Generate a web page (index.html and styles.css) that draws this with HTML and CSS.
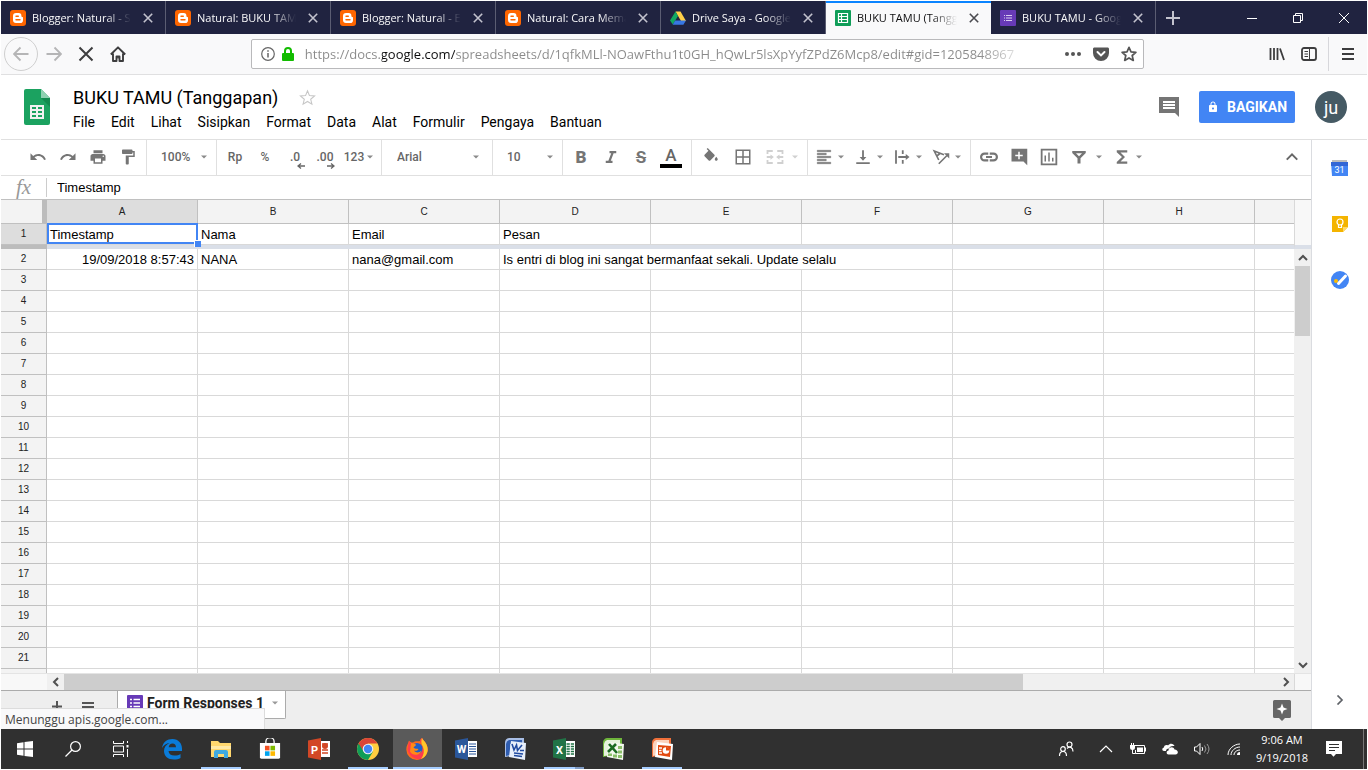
FILE: index.html
```html
<!DOCTYPE html>
<html lang="id">
	<head>
		<meta charset="UTF-8">
		<title>BUKU TAMU (Tanggapan)</title>
		<link rel="stylesheet" href="styles.css">
	</head>
	<body>
		<!-- icons used more than once -->
		<svg class="defs" aria-hidden="true">
			<symbol id="i-close" viewBox="0 0 10 10"><path d="M.8.8l8.4 8.4M9.2.8L.8 9.2" fill="none" stroke="currentColor" stroke-width="1.6"/></symbol>
			<symbol id="i-down" viewBox="0 0 8 8"><path d="M1 2.5h6l-3 3z" fill="currentColor"/></symbol>
			<symbol id="i-blogger" viewBox="0 0 16 16">
				<rect width="16" height="16" rx="3" fill="#ff6600"/>
				<path d="M6 3h2.6A2.8 2.8 0 0 1 11.4 6c.1.8.4.9 1 1 .5.1.6.4.6.8v2.4A2.8 2.8 0 0 1 10.200 13H6a3 3 0 0 1-3-3V6a3 3 0 0 1 3-3z" fill="#fff"/>
				<path d="M6 6.200h2.300M6 9.800h4" stroke="#ff6600" stroke-width="1.400" stroke-linecap="round"/>
			</symbol>
			<symbol id="i-form" viewBox="0 0 16 16">
				<rect width="16" height="16" rx="1" fill="#673ab7"/>
				<path d="M3 4.500h2M3 8h2M3 11.500h2M6.500 4.500H13M6.500 8H13M6.500 11.500H13" stroke="#fff" stroke-width="1.600"/>
			</symbol>
		</svg>

		<div class="tabs">
			<div class="tab">
				<svg class="favicon"><use href="#i-blogger"/></svg>
				<span class="tab-name">Blogger: Natural - S</span>
				<button class="tab-close" aria-label="Tutup"><svg><use href="#i-close"/></svg></button>
			</div>
			<div class="tab">
				<svg class="favicon"><use href="#i-blogger"/></svg>
				<span class="tab-name">Natural: BUKU TAM</span>
				<button class="tab-close" aria-label="Tutup"><svg><use href="#i-close"/></svg></button>
			</div>
			<div class="tab">
				<svg class="favicon"><use href="#i-blogger"/></svg>
				<span class="tab-name">Blogger: Natural - E</span>
				<button class="tab-close" aria-label="Tutup"><svg><use href="#i-close"/></svg></button>
			</div>
			<div class="tab">
				<svg class="favicon"><use href="#i-blogger"/></svg>
				<span class="tab-name">Natural: Cara Mema</span>
				<button class="tab-close" aria-label="Tutup"><svg><use href="#i-close"/></svg></button>
			</div>
			<div class="tab">
				<svg class="favicon" viewBox="0 0 16 16"><path d="M5.500 1.500h5L16 11h-5z" fill="#ffcf48"/><path d="M5.500 1.500L8 6l-5.200 8.500L0 10.500z" fill="#11a861"/><path d="M5.200 10.500H16l-2.600 4.200H2.700z" fill="#3777e3"/></svg>
				<span class="tab-name">Drive Saya - Google</span>
				<button class="tab-close" aria-label="Tutup"><svg><use href="#i-close"/></svg></button>
			</div>
			<div class="tab active">
				<svg class="favicon" viewBox="0 0 16 16"><rect width="16" height="16" rx="1" fill="#0f9d58"/><path d="M3.500 3.500h9v9h-9zM3.500 6.500h9M3.500 9.500h9M6.500 3.500v9" fill="none" stroke="#fff" stroke-width="1.200"/></svg>
				<span class="tab-name">BUKU TAMU (Tangg</span>
				<button class="tab-close" aria-label="Tutup"><svg><use href="#i-close"/></svg></button>
			</div>
			<div class="tab">
				<svg class="favicon" viewBox="0 0 16 16"><rect width="16" height="16" rx="1" fill="#673ab7"/><path d="M4 5.500h1M4 8h1M4 10.500h1M6 5.500h6M6 8h6M6 10.500h6" stroke="#d9ccf0" stroke-width="1"/></svg>
				<span class="tab-name">BUKU TAMU - Goog</span>
				<button class="tab-close" aria-label="Tutup"><svg><use href="#i-close"/></svg></button>
			</div>
			<button class="new-tab" aria-label="Tab baru"><svg viewBox="0 0 14 14"><path d="M7 0v14M0 7h14" stroke="#c3c3ce" stroke-width="2"/></svg></button>
			<div class="window-btns">
				<button aria-label="Minimize"><svg viewBox="0 0 10 10"><path d="M0 5.500h10" stroke="#fff"/></svg></button>
				<button aria-label="Restore"><svg viewBox="0 0 10 10"><path d="M.5 2.500h7v7h-7zM2.500 2.500v-2h7v7h-2" fill="none" stroke="#fff"/></svg></button>
				<button aria-label="Close"><svg viewBox="0 0 10 10"><path d="M0 0l10 10M10 0L0 10" stroke="#fff"/></svg></button>
			</div>
		</div>

		<div class="nav">
			<button class="back" aria-label="Kembali"><svg viewBox="0 0 16 16"><path d="M15.500 8H1M7.500 1.500L1 8l6.500 6.500" fill="none" stroke="#b5b5b6" stroke-width="1.800"/></svg></button>
			<button class="nav-btn" aria-label="Maju"><svg viewBox="0 0 16 16"><path d="M.5 8H15M8.500 1.500L15 8l-6.500 6.500" fill="none" stroke="#b5b5b6" stroke-width="1.800"/></svg></button>
			<button class="nav-btn" aria-label="Stop"><svg viewBox="0 0 16 16"><path d="M1.500 1.500l13 13M14.500 1.500l-13 13" stroke="#3d3d3e" stroke-width="2"/></svg></button>
			<button class="nav-btn" aria-label="Beranda"><svg viewBox="0 0 16 16"><path d="M.8 8.500L8 1.300l7.200 7.200M3 7.500V15h3.500v-4.500h3V15H13V7.500" fill="none" stroke="#3d3d3e" stroke-width="1.900" stroke-linejoin="round"/><rect x="7.300" y="11" width="1.500" height="1.500" fill="#3d3d3e"/></svg></button>
			<div class="spacer"></div>
			<div class="url-box">
				<svg class="url-info" viewBox="0 0 14 14"><circle cx="7" cy="7" r="6.300" fill="none" stroke="#666" stroke-width="1.200"/><path d="M7 6v4.500M7 3.300v1.500" stroke="#666" stroke-width="1.500"/></svg>
				<svg class="url-lock" viewBox="0 0 12 14"><path d="M3 7V4a3 3 0 0 1 6 0v3" fill="none" stroke="#12bc00" stroke-width="2"/><rect y="6" width="12" height="8" rx="1" fill="#12bc00"/></svg>
				<input class="url" type="text" aria-label="Alamat" value="https://docs.google.com/spreadsheets/d/1qfkMLl-NOawFthu1t0GH_hQwLr5lsXpYyfZPdZ6Mcp8/edit#gid=1205848967">
				<svg class="url-dots" viewBox="0 0 16 16"><g fill="#555"><circle cx="2" cy="8" r="2"/><circle cx="8" cy="8" r="2"/><circle cx="14" cy="8" r="2"/></g></svg>
				<svg class="url-pocket" viewBox="0 0 16 16"><path d="M1.500 1.500h13c.8 0 1.500.6 1.500 1.400V7a8 8 0 0 1-16 0V2.900c0-.8.7-1.400 1.500-1.400z" fill="#555"/><path d="M4.500 6L8 9.400 11.500 6" fill="none" stroke="#fff" stroke-width="2" stroke-linecap="round"/></svg>
				<svg class="url-star" viewBox="0 0 16 16"><path d="M8 1.300l2 4.500 4.900.5-3.700 3.200 1.100 4.900L8 11.900l-4.300 2.500 1.100-4.900L1.100 6.300 6 5.800z" fill="none" stroke="#555" stroke-width="1.700" stroke-linejoin="round"/></svg>
			</div>
			<div class="spacer"></div>
			<button class="nav-btn" aria-label="Pustaka"><svg viewBox="0 0 16 16"><path d="M1.500 2v12M5 2v12M8.500 2v12M11 2.500l4 11.500" stroke="#3d3d3e" stroke-width="1.800"/></svg></button>
			<button class="nav-btn" aria-label="Bilah samping"><svg viewBox="0 0 16 16"><rect x="1" y="2" width="14" height="12" rx="2" fill="none" stroke="#3d3d3e" stroke-width="1.800"/><path d="M8.500 2v12M3.500 5.500H7M3.500 8H7M3.500 10.500H7" stroke="#3d3d3e"/></svg></button>
			<button class="nav-menu" aria-label="Menu"><svg viewBox="0 0 14 14"><path d="M1 2h12M1 7h12M1 12h12" stroke="#3d3d3e" stroke-width="2"/></svg></button>
		</div>

		<header class="doc-head">
			<svg class="logo" viewBox="0 0 26 36"><path d="M2 0h15l9 9v25a2 2 0 0 1-2 2H2a2 2 0 0 1-2-2V2a2 2 0 0 1 2-2z" fill="#1ba260"/><path d="M17 0l9 9h-9z" fill="#8ed1b1"/><path d="M17 9h9v9z" fill="#128a4f"/><path d="M6 16h14v14H6z" fill="#f1f1f1"/><path d="M8 18h4v2H8zM14 18h4v2h-4zM8 22h4v2H8zM14 22h4v2h-4zM8 26h4v2H8zM14 26h4v2h-4z" fill="#1ba260"/></svg>
			<div class="doc-info">
				<div class="title-row">
					<h1>BUKU TAMU (Tanggapan)</h1>
					<button class="star" aria-label="Bintang"><svg viewBox="0 0 24 24"><path d="M12 3.500l2.400 6 6.600.5-5 4.200 1.600 6.300-5.600-3.500-5.600 3.500L8 14.200 3 10l6.600-.5z" fill="none" stroke="#c6c6c6" stroke-width="1.300"/></svg></button>
				</div>
				<div class="menus">
					<button>File</button>
					<button>Edit</button>
					<button>Lihat</button>
					<button>Sisipkan</button>
					<button>Format</button>
					<button>Data</button>
					<button>Alat</button>
					<button>Formulir</button>
					<button>Pengaya</button>
					<button>Bantuan</button>
				</div>
			</div>
			<button class="comments" aria-label="Komentar"><svg viewBox="0 0 24 24"><path d="M22 2H2v16h16l4 4zM18 14H6v-2h12v2zm0-3H6V9h12v2zm0-3H6V6h12v2z" fill="#757575"/></svg></button>
			<button class="share"><svg viewBox="0 0 24 24"><path d="M18 8h-1V6c0-2.760-2.240-5-5-5S7 3.240 7 6v2H6c-1.100 0-2 .9-2 2v10c0 1.100.9 2 2 2h12c1.100 0 2-.9 2-2V10c0-1.100-.9-2-2-2zm-6 9c-1.100 0-2-.9-2-2s.9-2 2-2 2 .9 2 2-.9 2-2 2zm3.100-9H8.900V6c0-1.710 1.390-3.100 3.100-3.100 1.710 0 3.100 1.390 3.100 3.100v2z" fill="#fff"/></svg>BAGIKAN</button>
			<button class="avatar">ju</button>
		</header>

		<div class="workspace">
			<main class="sheet">
				<div class="toolbar">
					<div class="group first">
						<button class="tool" aria-label="Urungkan"><svg viewBox="0 0 24 24"><path d="M12.500 8c-2.650 0-5.050.99-6.900 2.600L2 7v9h9l-3.620-3.620c1.390-1.160 3.160-1.880 5.120-1.880 3.540 0 6.550 2.310 7.600 5.500l2.370-.78C21.080 11.030 17.150 8 12.500 8z"/></svg></button>
						<button class="tool" aria-label="Ulangi"><svg viewBox="0 0 24 24"><path d="M18.400 10.600C16.550 8.990 14.150 8 11.500 8c-4.650 0-8.580 3.030-9.960 7.220L3.900 16c1.050-3.190 4.050-5.500 7.600-5.500 1.950 0 3.730.72 5.120 1.880L13 16h9V7l-3.600 3.600z"/></svg></button>
						<button class="tool" aria-label="Cetak"><svg viewBox="0 0 24 24"><path d="M19 8H5c-1.660 0-3 1.340-3 3v6h4v4h12v-4h4v-6c0-1.660-1.340-3-3-3zm-3 11H8v-5h8v5zm3-7c-.55 0-1-.45-1-1s.45-1 1-1 1 .45 1 1-.45 1-1 1zm-1-9H6v4h12V3z"/></svg></button>
						<button class="tool" aria-label="Salin format"><svg viewBox="0 0 24 24"><path d="M18 4V3c0-.55-.45-1-1-1H5c-.55 0-1 .45-1 1v4c0 .55.45 1 1 1h12c.55 0 1-.45 1-1V6h1v4H9v11c0 .55.45 1 1 1h2c.55 0 1-.45 1-1v-9h8V4h-3z"/></svg></button>
					</div>
					<div class="group drop">
						<select class="zoom" aria-label="Zoom"><option>100%</option></select>
						<svg class="arrow"><use href="#i-down"/></svg>
					</div>
					<div class="group">
						<button class="tool">Rp</button>
						<button class="tool">%</button>
						<button class="tool dec">.0<svg viewBox="0 0 8 6"><path d="M8 3H2M4 .5L1 3l3 2.500" fill="none" stroke="#666" stroke-width="1.300"/></svg></button>
						<button class="tool dec">.00<svg viewBox="0 0 8 6"><path d="M0 3h6M4 .5L7 3 4 5.500" fill="none" stroke="#666" stroke-width="1.300"/></svg></button>
						<button class="tool numbers">123<svg class="arrow"><use href="#i-down"/></svg></button>
					</div>
					<div class="group drop wide-drop">
						<select class="font" aria-label="Font"><option>Arial</option></select>
						<svg class="arrow"><use href="#i-down"/></svg>
					</div>
					<div class="group drop">
						<select class="zoom" aria-label="Ukuran font"><option>10</option></select>
						<svg class="arrow"><use href="#i-down"/></svg>
					</div>
					<div class="group">
						<button class="tool bold">B</button>
						<button class="tool" aria-label="Miring"><svg viewBox="0 0 24 24"><path d="M10 5.500h9M5 18.500h9M14.500 5.500l-5 13" fill="none" stroke="#757575" stroke-width="3"/></svg></button>
						<button class="tool strike">S</button>
						<button class="tool text-color"><span>A</span></button>
					</div>
					<div class="group fill">
						<button class="tool" aria-label="Warna isian"><svg viewBox="0 0 24 24"><path d="M16.560 8.940L7.620 0 6.210 1.410l2.380 2.380-5.150 5.150c-.59.59-.59 1.540 0 2.120l5.500 5.500c.29.29.68.44 1.060.44s.77-.15 1.060-.44l5.500-5.500c.59-.58.59-1.530 0-2.120zM19 11.500s-2 2.170-2 3.500c0 1.100.9 2 2 2s2-.9 2-2c0-1.330-2-3.500-2-3.500z"/></svg></button>
						<button class="tool" aria-label="Batas"><svg viewBox="0 0 24 24"><path d="M2 2v20h20V2H2zm9 18H4v-7h7v7zm0-9H4V4h7v7zm9 9h-7v-7h7v7zm0-9h-7V4h7v7z"/></svg></button>
						<button class="tool pair wide disabled" aria-label="Gabungkan"><svg viewBox="0 0 24 24"><path d="M2 8V4h7M15 4h7v4M2 16v4h7M15 20h7v-4M1 12h6M23 12h-6" fill="none" stroke="currentColor" stroke-width="2.400"/><path d="M6 8.500l4.500 3.500L6 15.500zM18 8.500L13.500 12l4.500 3.500z"/></svg><svg class="arrow"><use href="#i-down"/></svg></button>
					</div>
					<div class="group align">
						<button class="tool pair" aria-label="Perataan horizontal"><svg viewBox="0 0 24 24"><path d="M15 15H3v2h12v-2zm0-8H3v2h12V7zM3 13h18v-2H3v2zm0 8h18v-2H3v2zM3 3v2h18V3H3z" stroke="#757575" stroke-width=".6"/></svg><svg class="arrow"><use href="#i-down"/></svg></button>
						<button class="tool pair" aria-label="Perataan vertikal"><svg viewBox="0 0 24 24"><path d="M16.500 12H13.200V3h-2.400v9H7.500l4.500 5 4.500-5zM3 19v2.400h18V19H3z"/></svg><svg class="arrow"><use href="#i-down"/></svg></button>
						<button class="tool pair" aria-label="Penggabungan teks"><svg viewBox="0 0 24 24"><path d="M4 3v18M13 3v5M13 16v5M7 12h11" fill="none" stroke="currentColor" stroke-width="2.400"/><path d="M17 8l5 4-5 4z"/></svg><svg class="arrow"><use href="#i-down"/></svg></button>
						<button class="tool pair" aria-label="Putar teks"><svg viewBox="0 0 24 24"><path d="M9 16L3 4l13 5M6 11l5-4M9 21L20 10" fill="none" stroke="currentColor" stroke-width="2.200"/><path d="M16 7h7v7z"/></svg><svg class="arrow"><use href="#i-down"/></svg></button>
					</div>
					<div class="group last">
						<button class="tool" aria-label="Tautan"><svg viewBox="0 0 24 24"><path d="M2.900 12c0-1.710 1.390-3.100 3.100-3.100h5V6H6a6 6 0 0 0 0 12h5v-2.900H6c-1.710 0-3.100-1.390-3.100-3.100zM8 13.200h8v-2.400H8v2.400zM18 6h-5v2.900h5a3.100 3.100 0 0 1 0 6.200h-5V18h5a6 6 0 0 0 0-12z"/></svg></button>
						<button class="tool" aria-label="Sisipkan komentar"><svg viewBox="0 0 24 24"><path d="M22 1H2v17h16l5 5V1zM17 11h-4v4h-2v-4H7V9h4V5h2v4h4z"/></svg></button>
						<button class="tool" aria-label="Diagram"><svg viewBox="0 0 24 24"><path d="M2.200 2.200h19.600v19.600H2.200z" fill="none" stroke="currentColor" stroke-width="2.400"/><path d="M6 10h2v8H6zM11 6h2v12h-2zM16 13h2v5h-2z"/></svg></button>
						<button class="tool pair wide" aria-label="Filter"><svg viewBox="0 0 24 24"><path d="M3 4h18v2.500l-7 7v7h-4v-7L3 6.500zM8 7l4 4 4-4z" fill-rule="evenodd"/></svg><svg class="arrow"><use href="#i-down"/></svg></button>
						<button class="tool pair" aria-label="Fungsi"><svg viewBox="0 0 24 24"><path d="M19 3H5v2.500L12 12l-7 6.500V21h14v-3h-9l6-6-6-6h9z"/></svg><svg class="arrow"><use href="#i-down"/></svg></button>
					</div>
					<button class="tool collapse" aria-label="Sembunyikan menu"><svg viewBox="0 0 24 24"><path d="M5 15.500l7-7 7 7" fill="none" stroke="#666" stroke-width="2.600"/></svg></button>
				</div>

				<div class="formula">
					<label class="fx" for="formula">fx</label>
					<input id="formula" type="text" value="Timestamp">
				</div>

				<div class="grid-area">
					<div class="grid">
						<table>
							<colgroup>
								<col class="c-num"><col class="c"><col class="c"><col class="c"><col class="c"><col class="c"><col class="c"><col class="c"><col class="c"><col>
							</colgroup>
							<thead>
								<tr><th class="corner"></th><th class="on">A</th><th>B</th><th>C</th><th>D</th><th>E</th><th>F</th><th>G</th><th>H</th><th></th></tr>
							</thead>
							<tbody id="rows">
								<tr><th class="on">1</th><td class="selected">Timestamp<i class="handle"></i></td><td>Nama</td><td>Email</td><td>Pesan</td><td></td><td></td><td></td><td></td><td></td></tr>
								<tr class="freeze"><th></th><td colspan="9"></td></tr>
								<tr><th>2</th><td class="date">19/09/2018 8:57:43</td><td>NANA</td><td>nana@gmail.com</td><td colspan="3">Is entri di blog ini sangat bermanfaat sekali. Update selalu</td><td></td><td></td><td></td></tr>
							</tbody>
						</table>
					</div>
					<div class="vscroll">
						<div class="vscroll-head"></div>
						<button aria-label="Atas"><svg viewBox="0 0 10 10"><path d="M1 7l4-4 4 4" fill="none" stroke="#505050" stroke-width="2"/></svg></button>
						<div class="vthumb"></div>
						<button class="end" aria-label="Bawah"><svg viewBox="0 0 10 10"><path d="M1 3l4 4 4-4" fill="none" stroke="#505050" stroke-width="2"/></svg></button>
					</div>
				</div>
				<div class="hscroll">
					<div class="hscroll-left"></div>
					<button aria-label="Kiri"><svg viewBox="0 0 10 10"><path d="M7 1L3 5l4 4" fill="none" stroke="#505050" stroke-width="2"/></svg></button>
					<div class="hthumb"></div>
					<div class="htrack"></div>
					<button aria-label="Kanan"><svg viewBox="0 0 10 10"><path d="M3 1l4 4-4 4" fill="none" stroke="#505050" stroke-width="2"/></svg></button>
					<div class="hscroll-corner"></div>
				</div>

				<div class="sheet-tabs">
					<button class="sheet-btn" aria-label="Tambahkan sheet"><svg viewBox="0 0 12 12"><path d="M6 1v11M1 6.500h10" stroke="#555" stroke-width="2"/></svg></button>
					<button class="sheet-btn" aria-label="Semua sheet"><svg viewBox="0 0 12 12"><path d="M0 3h12M0 7h12M0 11h12" stroke="#555" stroke-width="2"/></svg></button>
					<button class="sheet-tab"><svg class="favicon"><use href="#i-form"/></svg>Form Responses 1<svg class="arrow"><use href="#i-down"/></svg></button>
					<button class="explore" aria-label="Jelajahi"><svg viewBox="0 0 18 21"><path d="M1.500 0h15A1.500 1.500 0 0 1 18 1.500v15a1.500 1.500 0 0 1-1.500 1.500H12l-3 3-3-3H1.500A1.500 1.500 0 0 1 0 16.500v-15A1.500 1.500 0 0 1 1.500 0z" fill="#666"/><path d="M9 3.500l1.500 4L14.500 9l-4 1.500-1.500 4-1.500-4-4-1.500 4-1.500z" fill="#fff"/></svg></button>
				</div>
			</main>

			<aside class="side">
				<svg class="side-icon" viewBox="0 0 18 18"><path d="M1 1h15v4H1z" fill="#bdbdbd"/><path d="M0 3h17v14H1z" fill="#4285f4"/><path d="M0 3h17v4H0z" fill="#3367d6"/><text x="8.500" y="13.500" text-anchor="middle">31</text></svg>
				<svg class="side-icon" viewBox="0 0 18 18"><path d="M1 1h16v11l-5 5H1z" fill="#f4b400"/><path d="M12 17v-5h5z" fill="#ffd966"/><circle cx="9" cy="7" r="3" fill="none" stroke="#fff" stroke-width="1.200"/><path d="M7.500 9.500v3h3v-3" fill="none" stroke="#fff" stroke-width="1.200"/></svg>
				<svg class="side-icon" viewBox="0 0 18 18"><circle cx="9" cy="9" r="9" fill="#4285f4"/><circle cx="5" cy="10" r="2" fill="#fbbc04"/><path d="M7.500 12.500L14.500 5" stroke="#fff" stroke-width="3" stroke-linecap="round"/></svg>
				<button class="side-toggle" aria-label="Sembunyikan panel"><svg viewBox="0 0 10 10"><path d="M2.500.5L7 5 2.500 9.500" fill="none" stroke="#5f6368" stroke-width="1.700"/></svg></button>
			</aside>
			<div class="status">Menunggu apis.google.com...</div>
		</div>

		<footer class="taskbar">
			<button class="sys" aria-label="Start"><svg viewBox="0 0 16 16"><path d="M0 2.300l6.500-1v6.200H0zM7.500 1.100L16 0v7.500H7.500zM0 8.500h6.500v6.200L0 13.700zM7.500 8.500H16V16l-8.500-1.100z" fill="#fff"/></svg></button>
			<button class="sys" aria-label="Cari"><svg viewBox="0 0 16 16"><circle cx="10.500" cy="5.500" r="4.900" fill="none" stroke="#fff" stroke-width="1.200"/><path d="M7 9L.5 15.500" stroke="#fff" stroke-width="1.300"/></svg></button>
			<button class="sys" aria-label="Task view"><svg viewBox="0 0 16 16"><path d="M.5 0v2.500h10V0M.5 5h10v6H.5zM.5 16v-2.500h10V16M14.500 0v2M14.500 8v8" fill="none" stroke="#fff"/><rect x="13.500" y="4" width="2" height="2.500" fill="#fff"/></svg></button>
			<button class="app first" aria-label="Edge"><svg viewBox="0 0 22 22"><path d="M1 10C2 4 6 1 11.500 1 17.500 1 21 5.500 21 10.500V13H7.500c.3 3 2.500 4.500 6 4.500 2.500 0 4.500-.7 6-1.600v4c-1.700 1-4 1.600-6.700 1.600C7 21.500 3 18 3 13c0-3.500 2-6.500 5.500-8C5.500 5.300 2.700 7 1 10zM7.700 9.300H15C15 7 13.700 5.500 11.500 5.500S8 7 7.700 9.300z" fill="#0a7bd8"/></svg></button>
			<button class="app open" aria-label="Explorer"><svg viewBox="0 0 22 22"><path d="M1 3h7l2 2h11v14H1z" fill="#ffd76e"/><path d="M1 8h20v3H1z" fill="#ffe9a6"/><path d="M4 20v-6a2 2 0 0 1 2-2h10a2 2 0 0 1 2 2v6h-4v-4H8v4z" fill="#3fa9e0"/></svg></button>
			<button class="app" aria-label="Store"><svg viewBox="0 0 24 24"><path d="M7.500 6V4a4.500 4.500 0 0 1 9 0v2" fill="none" stroke="#fff" stroke-width="1.400"/><path d="M1 5.500h22V21a1.500 1.500 0 0 1-1.500 1.500h-19A1.500 1.500 0 0 1 1 21z" fill="#fff"/><path d="M6.500 8.500h5v5h-5z" fill="#f25022"/><path d="M12.500 8.500h5v5h-5z" fill="#7fba00"/><path d="M6.500 14.500h5v5h-5z" fill="#00a4ef"/><path d="M12.500 14.500h5v5h-5z" fill="#ffb900"/></svg></button>
			<button class="app" aria-label="PowerPoint"><svg viewBox="0 0 22 22"><path d="M12 3h10v16H12z" fill="#fff"/><path d="M14 6h6M14 12h6M14 15h6" stroke="#d24726" stroke-width="1.500"/><circle cx="17" cy="8" r="3" fill="#d24726"/><path d="M0 2.500L13 0v22L0 19.500z" fill="#d24726"/><text x="6.500" y="15.500" text-anchor="middle">P</text></svg></button>
			<button class="app open" aria-label="Chrome"><svg viewBox="0 0 22 22"><circle cx="11" cy="11" r="11" fill="#ffcd40"/><path d="M1.500 5.500A11 11 0 0 0 11 22l5-8.500-5-2.500z" fill="#0f9d58"/><path d="M11 5.500h9.500L16 13z" fill="#ffcd40"/><path d="M1.500 5.500L7 14l4-8.500h9.500A11 11 0 0 0 1.500 5.500z" fill="#db4437"/><circle cx="11" cy="11" r="5.300" fill="#f1f1f1"/><circle cx="11" cy="11" r="4.200" fill="#4285f4"/></svg></button>
			<button class="app open current" aria-label="Firefox"><svg viewBox="0 0 22 22"><path d="M11 22A10.700 10.700 0 0 1 .3 11.500C.3 8 2 6 3 2.500 4 4 5 4.500 7 4.500 10 2 12 4 14 3c0-1.500 1-2.500 2-3 .5 2 5.700 5 5.700 11.500A10.700 10.700 0 0 1 11 22z" fill="#ff6a1a"/><path d="M3 3c.5 1.500 1.500 2 3.500 2L5 8l3 3-2 2c1 4 8 5 10 0 1-4 .5-6-1.500-8.500C13.500 2.500 15 1 16 0c.5 2 5.700 5 5.700 11.500 0 4-3 8-7 9.500C8 22 2 17 1.500 11z" fill="#ff3c4c"/><path d="M16 0c.5 2 5.700 5 5.700 11.500 0 4-2.700 8-6.700 9.500 3-4 3.500-8 2-12-1-2.500-2.500-4-1-9z" fill="#ffc928"/><circle cx="11" cy="10.500" r="5.500" fill="#2060c8"/><path d="M5 5c2 0 3 1 5 1.500 0 1.500-2 2-2.500 3 1 1.500 3.500 1 5 1.500-1 2-3 2-4.500 1.500 1 2 5 3 7.500 0-1 5-9 6-11.500 1z" fill="#ff8a16"/></svg></button>
			<button class="app" aria-label="Word"><svg viewBox="0 0 22 22"><path d="M12 3h10v16H12z" fill="#fff"/><path d="M14 6h7M14 8.500h7M14 11h7M14 13.500h7M14 16h7" stroke="#2b579a"/><path d="M0 2.500L13 0v22L0 19.500z" fill="#2b579a"/><text x="6.500" y="15" text-anchor="middle">W</text></svg></button>
			<button class="app" aria-label="Word 2007"><svg viewBox="0 0 22 22"><path d="M5 0h15v16L1 19V5a5 5 0 0 1 4-5z" fill="#a9bfe6"/><path d="M5 2h13v4H6v11l-4 1V6a5 5 0 0 1 3-4z" fill="#2f5db0"/><path d="M7 3l15 2-1 17-16-3z" fill="#e7effb"/><path d="M8 6l2 6 2.500-5 1 5.500L18 7M10 15l9 1M10 17.500l8 1M16 12.500h4" fill="none" stroke="#1f4aa0" stroke-width="1.600"/></svg></button>
			<button class="app open stacked" aria-label="Excel"><svg viewBox="0 0 22 22"><path d="M12 3h10v16H12z" fill="#fff"/><path d="M13.500 6H21M13.500 8.500H21M13.500 11H21M13.500 13.500H21M13.500 16H21" stroke="#217346" stroke-width="1.400"/><path d="M17.300 4v14" stroke="#fff"/><path d="M0 2.500L13 0v22L0 19.500z" fill="#217346"/><text x="6.500" y="15.500" text-anchor="middle">X</text></svg></button>
			<button class="app" aria-label="Excel 2007"><svg viewBox="0 0 22 22"><path d="M5 0h15v16L1 19V5a5 5 0 0 1 4-5z" fill="#6fb53c"/><path d="M5 2h13v14L2 18V6a5 5 0 0 1 3-4z" fill="#e6f3dc"/><path d="M7 4l15 2-1 16-16-3z" fill="#f3f8ee"/><path d="M7 6l8 9M14 6l-8 8" stroke="#1c6b22" stroke-width="2.600"/><path d="M16 8h4v3h-4zM16 12.500h4v3h-4zM11 16.500h4v3h-4zM16 17h4v3h-4zM6 15.500h4v2.500H6z" fill="#8bbf6a"/></svg></button>
			<button class="app open" aria-label="PowerPoint 2007"><svg viewBox="0 0 22 22"><path d="M5 0h15v16L1 19V5a5 5 0 0 1 4-5z" fill="#f0703a"/><path d="M5 2h13v4H6v11l-4 1V6a5 5 0 0 1 3-4z" fill="#fbd3bd"/><path d="M6 4l16 2-1 16-17-3z" fill="#fff"/><path d="M7 7l13 1-1 11-12-2z" fill="#e24a10"/><circle cx="15" cy="12.500" r="3.300" fill="#fff"/><path d="M15 12.500V9a3.500 3.500 0 0 1 3.500 3.500z" fill="#e24a10"/><path d="M8 10h3M8 12.500h2.500M8 15h3" stroke="#fff" stroke-width="1.300"/></svg></button>
			<div class="tray">
				<button class="people" aria-label="People"><svg viewBox="0 0 16 16"><g fill="none" stroke="#fff" stroke-width="1.200"><circle cx="5" cy="8" r="2.300"/><path d="M1.500 15c0-6 7-6 7 0"/><circle cx="11.500" cy="3.500" r="2.500"/><path d="M9 7.500c2.500-3 6-1 6 3"/></g></svg></button>
				<button aria-label="Ikon tersembunyi"><svg viewBox="0 0 16 16"><path d="M2 11l6-6 6 6" fill="none" stroke="#fff" stroke-width="1.200"/></svg></button>
				<button aria-label="Baterai"><svg viewBox="0 0 16 16"><path d="M4 4.500h10.500v8h-9V9" fill="none" stroke="#fff"/><path d="M15 6.500h1v4h-1zM7 6.500h6v4.500H7zM0 4h5v2.500a2.500 2.500 0 0 1-5 0z" fill="#fff"/><path d="M1.500 2v2M3.500 2v2M2.500 8v4.500h3" fill="none" stroke="#fff"/></svg></button>
				<button aria-label="OneDrive"><svg viewBox="0 0 16 16"><path d="M2 10C0 10-.5 7 2 6.500 2 4 5 3.500 6 4.500c2-3 6-2 6.500.5C9 4.500 7.500 6 7 7.500 5 7.500 4 8.500 4 10z" fill="#fff"/><path d="M6.500 13.500c-2.500 0-2.500-4 0-4C6.500 6 11.500 5 12.500 8.500c4 0 4.500 5 1 5z" fill="#fff"/></svg></button>
				<button aria-label="Volume"><svg viewBox="0 0 16 16"><path d="M.5 6h2L6 2.500v11L2.500 10h-2zM8 6q1.500 2 0 4" fill="none" stroke="#fff"/><path d="M10.500 4.500q3 3.500 0 7M13 3q4 5 0 10" fill="none" stroke="#999"/></svg></button>
				<button aria-label="Wi-Fi"><svg viewBox="0 0 16 16"><g fill="none" stroke="#fff"><path d="M2 14C2 8 8 3 14 3"/><path d="M5 14c0-4 4-8 9-8"/><path d="M8 14c0-3 3-5 6-5"/></g><path d="M11 14a3 3 0 0 1 3-3v3z" fill="#fff"/></svg></button>
				<div class="clock"><span>9:06 AM</span><span>9/19/2018</span></div>
				<button class="notif" aria-label="Notifikasi"><svg viewBox="0 0 16 16"><path d="M0 0h16v13h-6l-2.500 2.800L5 13H0z" fill="#fff"/><path d="M3 3.500h10M3 6.500h10M3 9.500h6" stroke="#2f2f2f"/></svg></button>
			</div>
		</footer>
		<script type="text/javascript" src="script.js"></script>
	</body>
</html>
```
FILE: styles.css
```css
*{
	margin:0;
	padding:0;
	box-sizing: border-box;
}
body{
	display: flex;
	flex-direction: column;
	height: 100vh;
	padding:1px;
	background: #fff;
	font-family: Roboto, "Liberation Sans", sans-serif;
	overflow: hidden;
}
button,input,select{
	border:none;
	background: none;
	outline: none;
	font-family: inherit;
	color: inherit;
}
button{
	display: flex;
	flex: none;
	align-items: center;
	justify-content: center;
}
svg{
	display: block;
	flex: none;
}
.defs{
	position: absolute;
	width: 0;
	height: 0;
}
.arrow{
	width: 8px;
	height: 8px;
}
.favicon{
	width: 16px;
	height: 16px;
}

/* browser tabs */
.tabs{
	display: flex;
	flex: none;
	height: 33px;
	background: #202340;
	font-family: "Open Sans", "Noto Sans", sans-serif;
	font-size: 11px;
	font-weight: 500;
	color: #f9f9fa;
}
.tab{
	display: flex;
	flex: 0 1 165px;
	align-items: center;
	min-width: 0;
	padding:0 12px 0 9px;
	border-right: 1px solid #5b5d72;
}
.tab.active{
	background: #f9f9fa;
	border-top: 2px solid #0a84ff;
	border-right: none;
	padding-bottom: 2px;
	color: #0c0c0d;
}
.tab-name{
	flex: 1;
	margin:0 8px 0 6px;
	white-space: nowrap;
	-webkit-mask-image: linear-gradient(to left, transparent 4px, #000 30px);
	mask-image: linear-gradient(to left, transparent 4px, #000 30px);
}
.tab-close svg{
	width: 10px;
	height: 10px;
	color: #c3c3ce;
}
.active .tab-close svg{
	color: #4a4a4f;
}
.new-tab{
	width: 34px;
}
.new-tab svg{
	width: 14px;
	height: 14px;
}
.window-btns{
	display: flex;
	margin-left: auto;
}
.window-btns button{
	width: 46px;
}
.window-btns svg{
	width: 10px;
	height: 10px;
}

/* address bar */
.nav{
	display: flex;
	flex: none;
	align-items: center;
	height: 41px;
	padding-left: 3px;
	background: #f9f9fa;
	border-bottom: 1px solid #e0e0e1;
}
.nav svg{
	width: 16px;
	height: 16px;
}
.back{
	width: 34px;
	height: 34px;
	border:1px solid #cfcfcf;
	border-radius: 50%;
}
.nav-btn{
	width: 32px;
	height: 32px;
}
.nav-menu{
	width: 39px;
	height: 34px;
	margin-left: 3px;
	border-left: 1px solid #d7d7db;
}
.nav .nav-menu svg{
	width: 14px;
	height: 14px;
}
.spacer{
	flex: 2;
}
.url-box{
	display: flex;
	flex: 15;
	align-items: center;
	height: 30px;
	padding:0 6px 0 9px;
	background: #fff;
	border:1px solid #b9b9bb;
	border-radius: 2px;
}
.nav .url-info{
	width: 14px;
	height: 14px;
	margin-right: 7px;
}
.nav .url-lock{
	width: 12px;
	height: 14px;
	margin-right: 11px;
}
.url{
	flex: 1;
	min-width: 0;
	margin-right: 36px;
	font-family: "Open Sans", "Noto Sans", sans-serif;
	font-size: 13px;
	/* domain is darker than the rest of the address */
	color: transparent;
	background: linear-gradient(to right, #8a8a8a 77px, #0c0c0d 77px, #0c0c0d 150px, #8a8a8a 150px);
	-webkit-background-clip: text;
	background-clip: text;
	-webkit-mask-image: linear-gradient(to left, transparent, #000 50px);
	mask-image: linear-gradient(to left, transparent, #000 50px);
}
.url-pocket{
	margin:0 12px;
}

/* document header */
.doc-head{
	display: flex;
	flex: none;
	align-items: center;
	height: 65px;
	padding:0 20px 0 23px;
	border-bottom: 1px solid #e0e0e0;
}
.logo{
	width: 26px;
	height: 36px;
}
.doc-info{
	flex: 1;
	margin-left: 15px;
	padding-top: 3px;
}
.title-row{
	display: flex;
	align-items: center;
	height: 26px;
	padding:2px 0 0 8px;
}
h1{
	font-size: 18px;
	font-weight: 400;
	color: #000;
}
.star{
	margin-left: 20px;
}
.star svg{
	width: 19px;
	height: 19px;
}
.menus{
	display: flex;
}
.menus button{
	height: 25px;
	padding:0 8px;
	font-size: 14px;
	color: #000;
}
.comments svg{
	width: 24px;
	height: 24px;
}
.share{
	width: 96px;
	height: 32px;
	margin:0 20px 0 18px;
	background: #4285f4;
	border-radius: 2px;
	font-size: 14px;
	font-weight: 700;
	color: #fff;
}
.share svg{
	width: 12px;
	height: 12px;
	margin-right: 8px;
}
.avatar{
	width: 32px;
	height: 32px;
	background: #455a64;
	border-radius: 50%;
	font-size: 18px;
	color: #fff;
}

.workspace{
	position: relative;
	display: flex;
	flex: 1;
	min-height: 0;
}
.sheet{
	display: flex;
	flex: 1;
	flex-direction: column;
	min-width: 0;
}

/* toolbar */
.toolbar{
	display: flex;
	flex: none;
	height: 36px;
	border-bottom: 1px solid #e0e0e0;
	font-size: 12px;
	font-weight: 500;
	color: #666;
}
.group{
	display: flex;
	align-items: center;
	padding:0 3px 1px;
	border-right: 1px solid #e0e0e0;
}
.group.first{
	padding-left: 22px;
}
.group.fill{
	gap: 2px;
	padding:0 4px 1px;
}
.group.align{
	padding:0 5px 1px 1px;
}
.group.last{
	border-right: none;
}
.group.drop{
	position: relative;
	padding:0 0 1px;
}
.drop .arrow{
	position: absolute;
	right: 8px;
	pointer-events: none;
}
.wide-drop .arrow{
	right: 12px;
}
.tool{
	width: 30px;
	height: 34px;
	font-size: 12px;
	font-weight: 500;
}
.tool svg{
	width: 18px;
	height: 18px;
	fill: #757575;
	color: #757575;
}
.tool .arrow,
.drop .arrow{
	width: 8px;
	height: 8px;
	color: #8a8a8a;
}
select{
	height: 34px;
	padding-left: 15px;
	-webkit-appearance: none;
	appearance: none;
	font-size: 12px;
	font-weight: 500;
}
.zoom{
	width: 69px;
	padding-left: 14px;
}
.font{
	width: 110px;
}
.tool.dec{
	position: relative;
}
.tool.dec svg{
	position: absolute;
	right: 5px;
	bottom: 5px;
	width: 8px;
	height: 6px;
}
.tool.numbers{
	width: 38px;
}
.numbers .arrow{
	margin-left: 2px;
}
.tool.bold{
	font-size: 17px;
	font-weight: 900;
	color: #757575;
}
.tool.strike{
	font-size: 17px;
	font-weight: 700;
	text-decoration: line-through;
	color: #757575;
}
.tool.text-color{
	font-size: 17px;
	line-height: 18px;
	margin-right: 2px;
}
.text-color span{
	width: 22px;
	border-bottom: 4px solid #000;
}
.tool.pair{
	justify-content: flex-start;
	gap: 4px;
	width: 39px;
	padding-left: 6px;
}
.tool.wide{
	gap: 7px;
	width: 43px;
}
.tool.disabled svg,
.tool.disabled .arrow{
	fill: #d0d0d0;
	color: #d0d0d0;
}
.collapse{
	margin:0 4px 0 auto;
}

/* formula bar */
.formula{
	display: flex;
	flex: none;
	align-items: center;
	height: 24px;
	border-bottom: 1px solid #c0c0c0;
}
.fx{
	width: 46px;
	border-right: 1px solid #ccc;
	text-align: center;
	font-family: "Liberation Serif", serif;
	font-size: 21px;
	line-height: 19px;
	font-style: italic;
	color: #999;
}
#formula{
	flex: 1;
	padding-left: 10px;
	font-family: "Liberation Sans", sans-serif;
	font-size: 13px;
	color: #000;
}

/* grid */
.grid-area{
	display: flex;
	flex: 1;
	min-height: 0;
}
.grid{
	flex: 1;
	min-width: 0;
	overflow: hidden;
}
table{
	width: 100%;
	table-layout: fixed;
	border-collapse: separate;
	border-spacing: 0;
	font-family: "Liberation Sans", sans-serif;
}
.c-num{
	width: 46px;
}
.c{
	width: 151px;
}
th{
	height: 21px;
	background: #f3f3f3;
	border-right: 1px solid #c0c0c0;
	border-bottom: 1px solid #c0c0c0;
	font-size: 10px;
	line-height: 12px;
	font-weight: 400;
	color: #222;
}
thead th{
	height: 24px;
}
thead th:last-child{
	border-right: none;
}
th.on{
	background: #ddd;
}
th.corner{
	border-right: 5px solid #bcbcbc;
}
td{
	height: 21px;
	padding:2px 3px 0;
	border-right: 1px solid #d9d9d9;
	border-bottom: 1px solid #d9d9d9;
	font-size: 13px;
	line-height: 18px;
	white-space: nowrap;
	color: #000;
}
td:last-child{
	border-right: none;
}
td.date{
	text-align: right;
}
.selected{
	position: relative;
}
.selected::after{
	content: "";
	position: absolute;
	inset:-1px -1px 0 0;
	border:2px solid #4285f4;
}
.handle{
	position: absolute;
	right: -4px;
	bottom: -3px;
	z-index: 1;
	width: 7px;
	height: 7px;
	background: #4285f4;
	border:solid #fff;
	border-width: 1px 0 0 1px;
}
.freeze th{
	height: 4px;
	background: #bcbcbc;
	border:none;
}
.freeze td{
	height: 4px;
	padding:0;
	background: #dadfe8;
	border:none;
}

/* scrollbars */
.vscroll{
	display: flex;
	flex-direction: column;
	width: 17px;
	background: #f0f0f0;
}
.vscroll-head{
	height: 49px;
	background: #f8f8f8;
	border-left: 1px solid #d9d9d9;
	border-bottom: 4px solid #dadfe8;
}
.vscroll button{
	height: 17px;
}
.vscroll svg,
.hscroll svg{
	width: 10px;
	height: 10px;
}
.vthumb{
	height: 70px;
	margin:0 1px;
	background: #cdcdcd;
}
.vscroll .end{
	margin-top: auto;
}
.hscroll{
	display: flex;
	flex: none;
	height: 17px;
	border-top: 1px solid #e4e4e4;
	background: #f0f0f0;
}
.hscroll-left{
	width: 46px;
	background: #f8f8f8;
}
.hscroll button{
	width: 17px;
}
.hthumb{
	flex: 960;
	background: #cdcdcd;
}
.htrack{
	flex: 254;
}
.hscroll-corner{
	width: 17px;
	background: #f8f8f8;
	border-left: 1px solid #d9d9d9;
}

/* sheet tabs */
.sheet-tabs{
	display: flex;
	flex: none;
	align-items: flex-start;
	height: 39px;
	padding:0 20px 0 40px;
	border-top: 1px solid #ababab;
	background: #eee;
}
.sheet-btn{
	width: 31px;
	height: 30px;
}
.sheet-btn svg{
	width: 12px;
	height: 12px;
}
.sheet-tab{
	height: 28px;
	margin-left: 14px;
	padding:0 6px 3px 9px;
	background: #fff;
	border:solid #ababab;
	border-width: 0 1px 1px;
	border-radius: 0 0 2px 2px;
	font-size: 14px;
	font-weight: 700;
	color: #222;
}
.sheet-tab .favicon{
	margin-right: 4px;
}
.sheet-tab .arrow{
	margin-left: 7px;
	color: #999;
}
.explore{
	margin:9px 0 0 auto;
}
.explore svg{
	width: 18px;
	height: 21px;
}

/* side panel */
.side{
	display: flex;
	flex: none;
	flex-direction: column;
	align-items: center;
	gap: 38px;
	width: 56px;
	padding:19px 0 24px;
	border-left: 1px solid #dadce0;
}
.side-icon{
	width: 18px;
	height: 18px;
}
.side-icon text{
	font-size: 9px;
	fill: #fff;
}
.side-toggle{
	margin-top: auto;
}
.side-toggle svg{
	width: 10px;
	height: 10px;
}

.status{
	position: absolute;
	left: 0;
	bottom: 0;
	width: 264px;
	height: 21px;
	padding-left: 4px;
	background: #f9f9fa;
	border:solid #dcdcdc;
	border-width: 1px 1px 0 0;
	font-family: "Open Sans", "Noto Sans", sans-serif;
	font-size: 12px;
	line-height: 22px;
	color: #444;
}

/* taskbar */
.taskbar{
	display: flex;
	flex: none;
	height: 40px;
	background: #303030;
}
.sys{
	width: 48px;
}
.sys svg{
	width: 16px;
	height: 16px;
}
.app{
	position: relative;
	width: 49px;
	padding-right: 2px;
}
.app.first{
	margin-left: 3px;
}
.app svg{
	width: 22px;
	height: 22px;
}
.app text{
	font-size: 11px;
	font-weight: 700;
	fill: #fff;
}
.app.open::after{
	content: "";
	position: absolute;
	left: 4px;
	right: 5px;
	bottom: 0;
	height: 2px;
	background: #a6cdff;
}
.app.current{
	background: #5a5a5a;
}
.app.current::after{
	left: 0;
	right: 0;
}
.app.stacked::after{
	background: linear-gradient(to right, #a6cdff 31px, #7f9bc4 31px);
}
.tray{
	display: flex;
	align-items: center;
	margin-left: auto;
	margin-right: 3px;
	padding-right: 9px;
	border-right: 1px solid #777;
}
.tray button{
	width: 32px;
	height: 40px;
}
.tray svg{
	width: 16px;
	height: 16px;
}
.tray .people{
	width: 48px;
}
.clock{
	display: flex;
	flex-direction: column;
	align-items: center;
	width: 64px;
	font-family: "Open Sans", "Noto Sans", sans-serif;
	font-size: 11px;
	line-height: 18px;
	color: #fff;
}
.tray .notif{
	width: 40px;
}
```
FILE: script.js
```js
var rows = document.getElementById("rows");
//	empty rows below the answers
for(var i=3;i<=22;i++){
	var tr = document.createElement("tr");
	var html = "<th>"+i+"</th>";
	for(var j=0;j<9;j++){
		html += "<td></td>";
	}
	tr.innerHTML = html;
	rows.appendChild(tr);
}
```
